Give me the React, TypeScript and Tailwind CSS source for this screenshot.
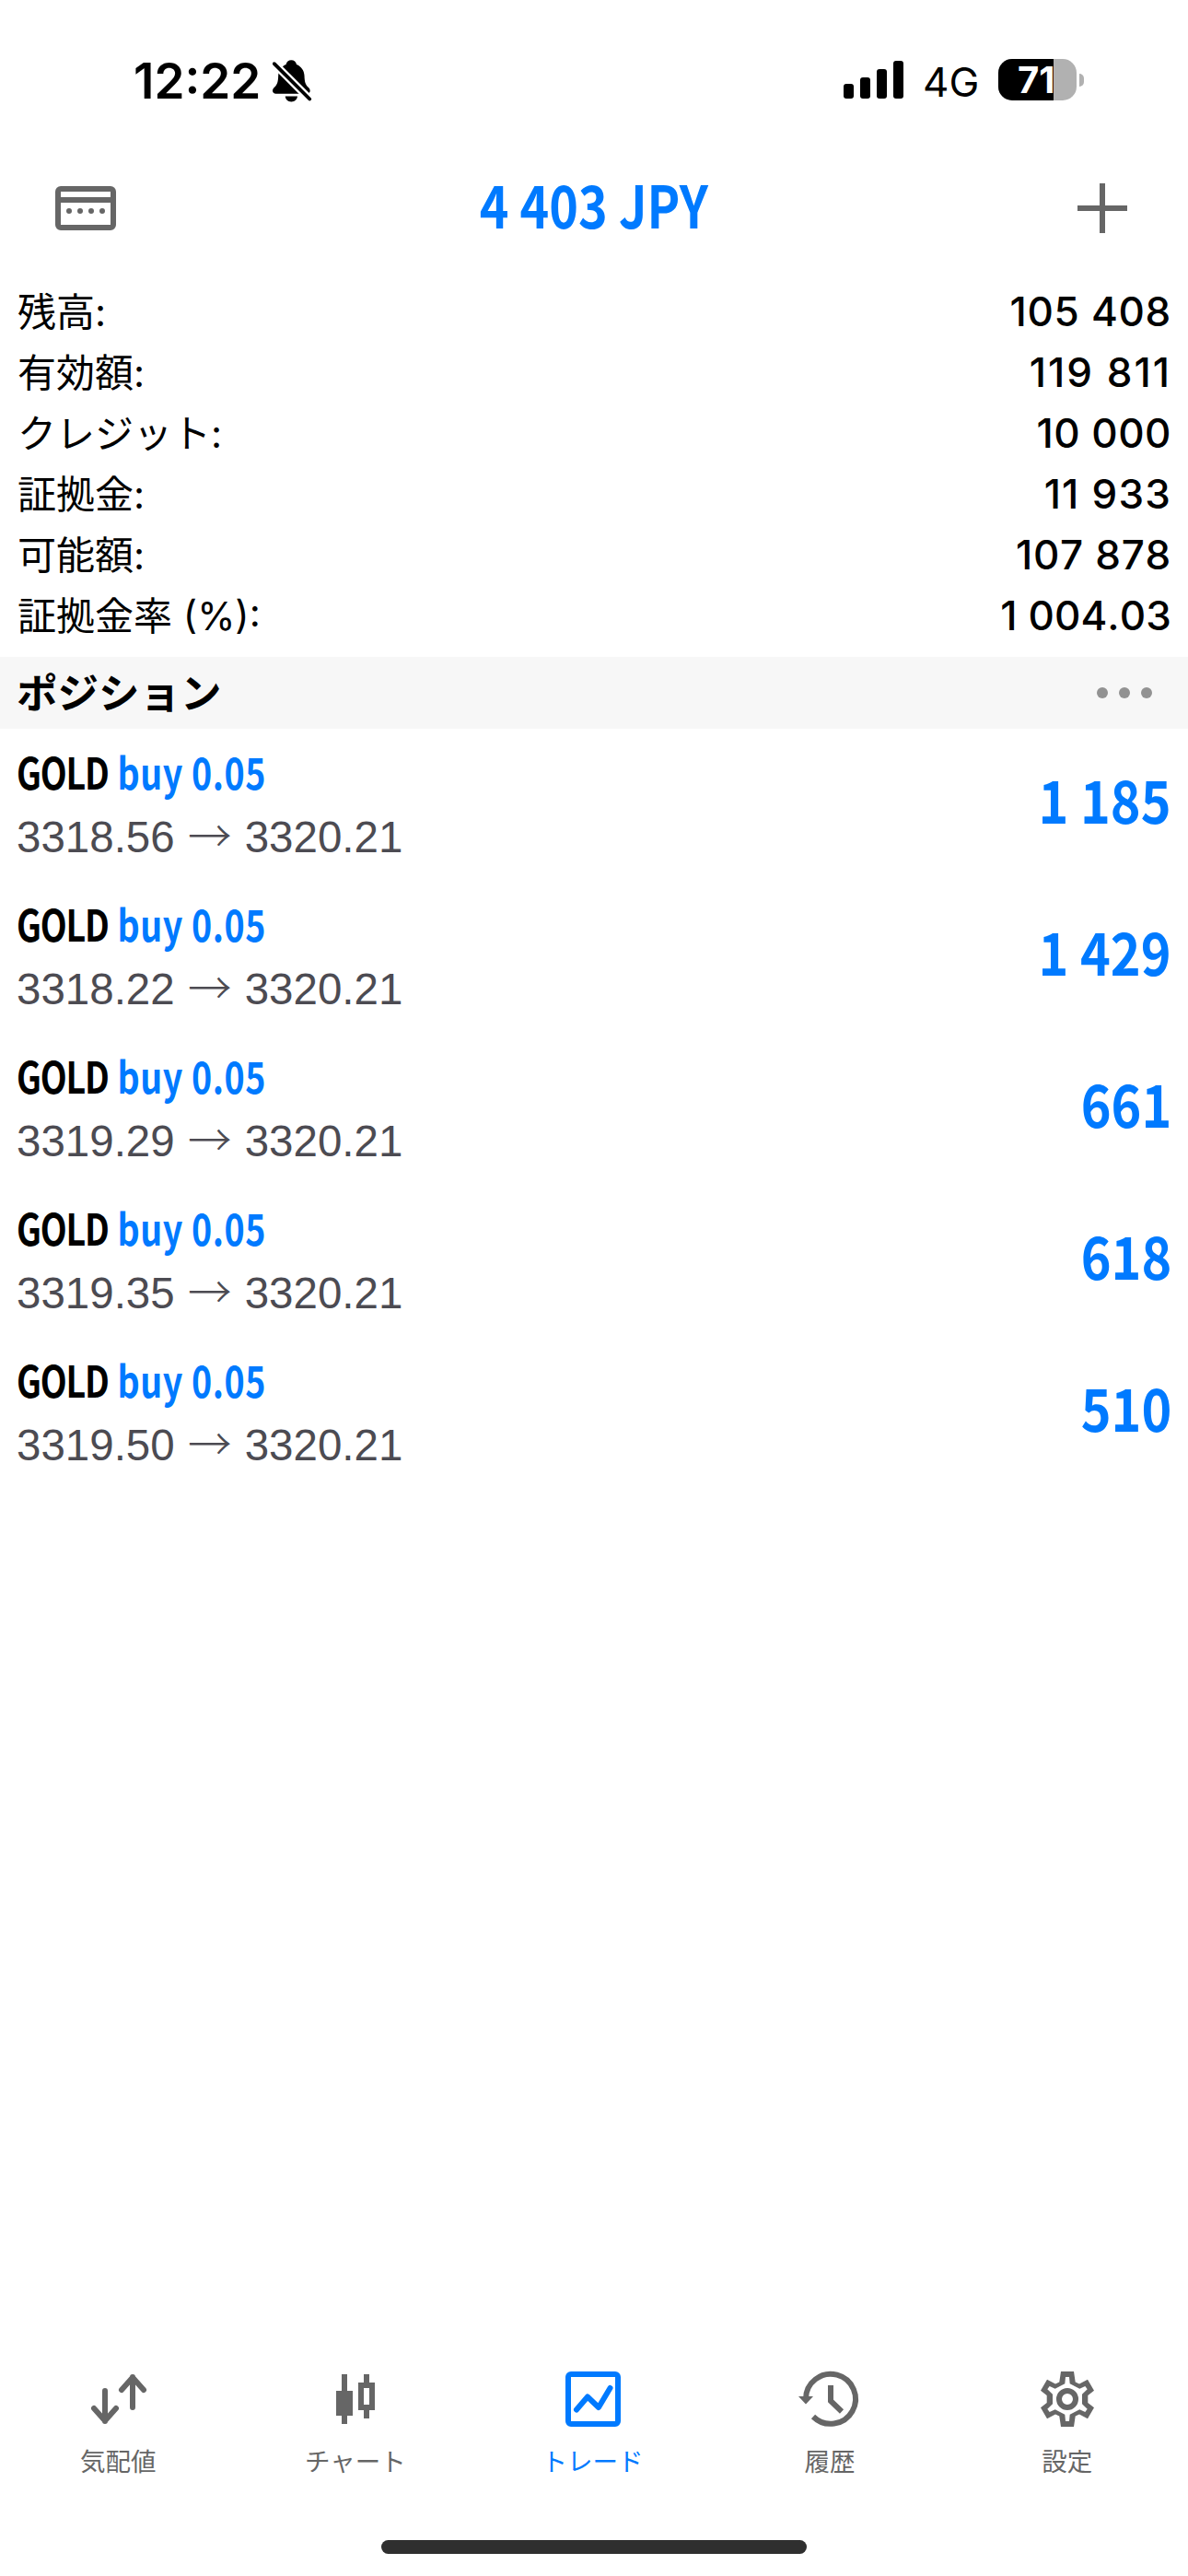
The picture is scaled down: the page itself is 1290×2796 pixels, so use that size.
import type { ReactNode } from "react";

const account = [
  { label: "残高:", value: "105 408", tracking: "tracking-[.7px]" },
  { label: "有効額:", value: "119 811", tracking: "tracking-[2px]" },
  { label: "クレジット:", value: "10 000", tracking: "tracking-[.5px]" },
  { label: "証拠金:", value: "11 933", tracking: "tracking-[1.2px]" },
  { label: "可能額:", value: "107 878", tracking: "tracking-[.7px]" },
  { label: "証拠金率 (%):", value: "1 004.03", tracking: "tracking-[.1px]" },
];

const positions = [
  { open: "3318.56", current: "3320.21", profit: "1 185" },
  { open: "3318.22", current: "3320.21", profit: "1 429" },
  { open: "3319.29", current: "3320.21", profit: "661" },
  { open: "3319.35", current: "3320.21", profit: "618" },
  { open: "3319.50", current: "3320.21", profit: "510" },
];

function StatusBar() {
  return (
    <div className="flex h-[174px] items-start justify-between pl-[145px] pr-[113px] pt-[64px] font-['Inter',sans-serif]">
      <div className="flex items-start">
        <span className="w-[151px] text-[53px] font-semibold leading-[49px]">12:22</span>
        <svg className="mt-px" width="44" height="46" viewBox="0 0 44 46">
          <path d="M20.3 .3c3 0 5.200 1.800 5.700 4.700 5 2 8.200 6.500 8.500 12 .3 7 1 9.500 4 12.500 1.500 1.500 2.200 2.600 2.200 4 0 2-1.400 3.200-3.700 3.200H3.700C1.400 36.700 0 35.500 0 33.500c0-1.400.7-2.500 2.200-4 3-3 3.700-5.500 4-12.500.3-5.500 3.500-10 8.400-12 .5-2.900 2.700-4.700 5.700-4.700z" />
          <path d="M13.700 39.500h13.300c-.5 3.600-3 5.900-6.700 5.900s-6.100-2.300-6.600-5.900z" />
          <path d="M-2 .3 44 46.300" stroke="#fff" strokeWidth="8.500" />
          <path d="M1.800 4.200 40.200 42.500" stroke="#000" strokeWidth="3.800" strokeLinecap="round" />
        </svg>
      </div>
      <div className="flex items-start">
        <svg className="mt-[2px]" width="65" height="41" viewBox="0 0 65 41">
          <rect x="0" y="25" width="11" height="16" rx="3" />
          <rect x="18" y="18" width="11" height="23" rx="3" />
          <rect x="36" y="9" width="11" height="32" rx="3" />
          <rect x="54" y="0" width="11" height="41" rx="3" />
        </svg>
        <span className="ml-[21px] w-[82px] text-[44px] leading-[50px]">4G</span>
        <div className="flex h-[45px] w-[85px] rounded-[15px] bg-[#b1b1b1]">
          <div className="w-[60px] rounded-l-[15px] bg-black pl-[21px] text-[40px] font-bold leading-[45px] text-white">71</div>
        </div>
        <div className="ml-[3px] mt-[16px] h-[14px] w-[5px] rounded-r-full bg-[#b1b1b1]" />
      </div>
    </div>
  );
}

function Header() {
  return (
    <header className="flex h-[131px] items-start justify-between pl-[60px] pr-[66px] pt-[25px] text-[#666]">
      <svg className="mt-[3px]" width="66" height="48" viewBox="0 0 66 48" fill="currentColor">
        <rect x="3" y="3" width="60" height="42" rx="3" fill="none" stroke="currentColor" strokeWidth="6" />
        <path d="M3 12h60v6H3z" />
        <circle cx="15" cy="27" r="3" />
        <circle cx="27" cy="27" r="3" />
        <circle cx="39" cy="27" r="3" />
        <circle cx="51" cy="27" r="3" />
      </svg>
      <h1 className="-mt-[6px] mr-[6px] scale-x-[.84] text-[64px] font-bold leading-[54px] text-[#007aff]">4 403 JPY</h1>
      <svg width="54" height="54" viewBox="0 0 54 54" fill="currentColor">
        <path d="M24 0h6v24h24v6H30v24h-6V30H0v-6h24z" />
      </svg>
    </header>
  );
}

function Position({ open, current, profit }: { open: string; current: string; profit: string }) {
  return (
    <div className="flex h-[165px] justify-between pl-[18px] pr-[18px]">
      <div className="pt-[18px]">
        <div className="origin-left scale-x-[.8] whitespace-pre text-[47px] font-bold leading-[56px]">
          <span className="mr-[3px] tracking-[-1.5px]">GOLD </span>
          <span className="tracking-[.7px] text-[#007aff]">buy 0.05</span>
        </div>
        <div className="mt-[16px] flex font-['Liberation_Sans',sans-serif] text-[47.500px] leading-[56px] text-[#4c4b52]">
          <span>{open}</span>
          <span className="-mt-[4px] w-[76px] text-center font-['Noto_Sans_CJK_JP',sans-serif] font-light">→</span>
          <span>{current}</span>
        </div>
      </div>
      <div className="origin-right scale-x-[.87] pt-[48px] text-[64px] font-bold leading-[54px] text-[#007aff]">{profit}</div>
    </div>
  );
}

function Tab({ label, active, children }: { label: string; active?: boolean; children: ReactNode }) {
  return (
    <div className={active ? "flex flex-1 flex-col items-center text-[#007aff]" : "flex flex-1 flex-col items-center text-[#666]"}>
      <svg width="72" height="72" viewBox="0 0 72 72" fill="none" stroke="currentColor" strokeWidth="6">
        {children}
      </svg>
      <span className="mr-px mt-[10px] text-[27.500px] leading-[40px]">{label}</span>
    </div>
  );
}

export default function App() {
  return (
    <div className="flex h-[2796px] w-[1290px] flex-col overflow-hidden bg-white font-['Noto_Sans_CJK_JP',sans-serif] text-black">
      <StatusBar />
      <Header />

      <section className="h-[408px] pl-[19px] pr-[18px] font-['Inter','Noto_Sans_CJK_JP',sans-serif]">
        {account.map((row) => (
          <div key={row.label} className="flex h-[66px] justify-between leading-[66px]">
            <span className="pt-px text-[42px]">{row.label}</span>
            <span className={`text-[44px] font-medium [font-kerning:none] ${row.tracking}`}>{row.value}</span>
          </div>
        ))}
      </section>

      <div className="flex h-[78px] items-center justify-between bg-[#f7f7f7] pl-[18px] pr-[39px]">
        <h2 className="-mt-[4px] text-[44.500px] font-bold leading-[78px]">ポジション</h2>
        <div className="flex gap-3">
          <i className="size-3 rounded-full bg-[#929292]" />
          <i className="size-3 rounded-full bg-[#929292]" />
          <i className="size-3 rounded-full bg-[#929292]" />
        </div>
      </div>

      <main className="flex-1">
        {positions.map((p) => (
          <Position key={p.open} {...p} />
        ))}
      </main>

      <nav className="flex h-[189px] pr-[2px]">
        <Tab label="気配値">
          <path d="M21 27v33M9 46l12 13.500L33 46M51 45V12M39 26l12-13.500L63 26" strokeLinecap="round" strokeLinejoin="round" />
        </Tab>
        <Tab label="チャート">
          <path d="M24 9v54M48 9v12M48 48v9" />
          <path d="M15 27h18v27H15z" fill="currentColor" stroke="none" />
          <path d="M42 21h12v24H42z" />
        </Tab>
        <Tab label="トレード" active>
          <rect x="9" y="9" width="54" height="54" rx="3" />
          <path d="m18 47.500 12-14L42 45l12.500-21" strokeLinecap="round" strokeLinejoin="round" />
        </Tab>
        <Tab label="履歴">
          <path d="M9 36A27 27 0 1 1 17 55" />
          <path d="M1 33h16l-8 8.500z" fill="currentColor" stroke="none" />
          <path d="M36 21v17l12 11.500" />
        </Tab>
        <Tab label="設定">
          <path
            d="M29 6h14l1.700 11.500 4.300 2 9-4.800 7 12-6.700 5.300v8l6.700 5.300-7 12-9-4.800-4.300 2L43 66H29l-1.700-11.500-4.300-2-9 4.800-7-12 6.700-5.300v-8L7 26.700l7-12 9 4.800 4.300-2zM34 12l-.7 7.300-10.600 5.400-6-2.700-2.400 3.300 5.700 5.400v10.600l-5.700 5.400 2.400 3.300 6-2.700 10.600 5.400.7 7.300h4l.7-7.300 10.600-5.400 6 2.700 2.400-3.300-5.700-5.400V30.700l5.700-5.400-2.400-3.300-6 2.700-10.600-5.400L38 12z"
            fill="currentColor"
            fillRule="evenodd"
            stroke="none"
          />
          <circle cx="36" cy="36" r="9" />
        </Tab>
      </nav>
      <div className="flex h-[39px] justify-center">
        <div className="h-[15px] w-[462px] rounded-full bg-[#2f2f2f]" />
      </div>
    </div>
  );
}
